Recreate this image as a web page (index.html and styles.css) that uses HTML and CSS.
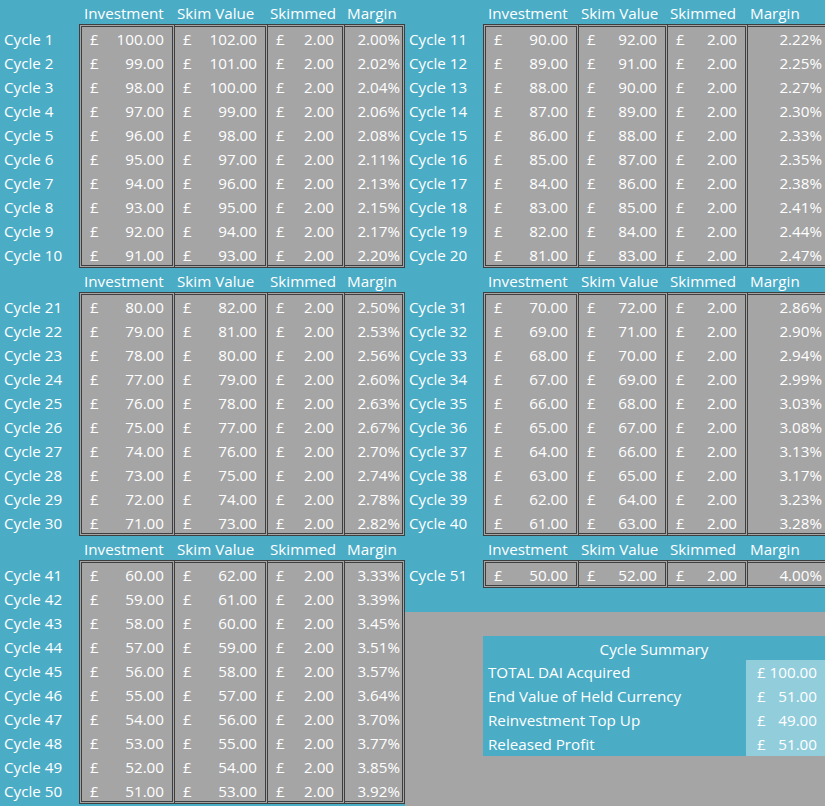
FILE: index.html
```html
<!DOCTYPE html>
<html>
<head>
<meta charset="utf-8">
<link rel="stylesheet" href="styles.css">
</head>
<body>
<div class="sheet">
  <div class="half left">
    <section class="block">
      <div class="col lab"><div>Cycle 1</div><div>Cycle 2</div><div>Cycle 3</div><div>Cycle 4</div><div>Cycle 5</div><div>Cycle 6</div><div>Cycle 7</div><div>Cycle 8</div><div>Cycle 9</div><div>Cycle 10</div></div>
      <div class="col c1"><div class="hd">Investment</div><div class="box"><div class="c"><b>£</b>100.00</div><div class="c"><b>£</b>99.00</div><div class="c"><b>£</b>98.00</div><div class="c"><b>£</b>97.00</div><div class="c"><b>£</b>96.00</div><div class="c"><b>£</b>95.00</div><div class="c"><b>£</b>94.00</div><div class="c"><b>£</b>93.00</div><div class="c"><b>£</b>92.00</div><div class="c"><b>£</b>91.00</div></div></div>
      <div class="col c2"><div class="hd">Skim Value</div><div class="box"><div class="c"><b>£</b>102.00</div><div class="c"><b>£</b>101.00</div><div class="c"><b>£</b>100.00</div><div class="c"><b>£</b>99.00</div><div class="c"><b>£</b>98.00</div><div class="c"><b>£</b>97.00</div><div class="c"><b>£</b>96.00</div><div class="c"><b>£</b>95.00</div><div class="c"><b>£</b>94.00</div><div class="c"><b>£</b>93.00</div></div></div>
      <div class="col c3"><div class="hd">Skimmed</div><div class="box"><div class="c"><b>£</b>2.00</div><div class="c"><b>£</b>2.00</div><div class="c"><b>£</b>2.00</div><div class="c"><b>£</b>2.00</div><div class="c"><b>£</b>2.00</div><div class="c"><b>£</b>2.00</div><div class="c"><b>£</b>2.00</div><div class="c"><b>£</b>2.00</div><div class="c"><b>£</b>2.00</div><div class="c"><b>£</b>2.00</div></div></div>
      <div class="col c4"><div class="hd">Margin</div><div class="box"><div class="c">2.00%</div><div class="c">2.02%</div><div class="c">2.04%</div><div class="c">2.06%</div><div class="c">2.08%</div><div class="c">2.11%</div><div class="c">2.13%</div><div class="c">2.15%</div><div class="c">2.17%</div><div class="c">2.20%</div></div></div>
    </section>
    <section class="block">
      <div class="col lab"><div>Cycle 21</div><div>Cycle 22</div><div>Cycle 23</div><div>Cycle 24</div><div>Cycle 25</div><div>Cycle 26</div><div>Cycle 27</div><div>Cycle 28</div><div>Cycle 29</div><div>Cycle 30</div></div>
      <div class="col c1"><div class="hd">Investment</div><div class="box"><div class="c"><b>£</b>80.00</div><div class="c"><b>£</b>79.00</div><div class="c"><b>£</b>78.00</div><div class="c"><b>£</b>77.00</div><div class="c"><b>£</b>76.00</div><div class="c"><b>£</b>75.00</div><div class="c"><b>£</b>74.00</div><div class="c"><b>£</b>73.00</div><div class="c"><b>£</b>72.00</div><div class="c"><b>£</b>71.00</div></div></div>
      <div class="col c2"><div class="hd">Skim Value</div><div class="box"><div class="c"><b>£</b>82.00</div><div class="c"><b>£</b>81.00</div><div class="c"><b>£</b>80.00</div><div class="c"><b>£</b>79.00</div><div class="c"><b>£</b>78.00</div><div class="c"><b>£</b>77.00</div><div class="c"><b>£</b>76.00</div><div class="c"><b>£</b>75.00</div><div class="c"><b>£</b>74.00</div><div class="c"><b>£</b>73.00</div></div></div>
      <div class="col c3"><div class="hd">Skimmed</div><div class="box"><div class="c"><b>£</b>2.00</div><div class="c"><b>£</b>2.00</div><div class="c"><b>£</b>2.00</div><div class="c"><b>£</b>2.00</div><div class="c"><b>£</b>2.00</div><div class="c"><b>£</b>2.00</div><div class="c"><b>£</b>2.00</div><div class="c"><b>£</b>2.00</div><div class="c"><b>£</b>2.00</div><div class="c"><b>£</b>2.00</div></div></div>
      <div class="col c4"><div class="hd">Margin</div><div class="box"><div class="c">2.50%</div><div class="c">2.53%</div><div class="c">2.56%</div><div class="c">2.60%</div><div class="c">2.63%</div><div class="c">2.67%</div><div class="c">2.70%</div><div class="c">2.74%</div><div class="c">2.78%</div><div class="c">2.82%</div></div></div>
    </section>
    <section class="block">
      <div class="col lab"><div>Cycle 41</div><div>Cycle 42</div><div>Cycle 43</div><div>Cycle 44</div><div>Cycle 45</div><div>Cycle 46</div><div>Cycle 47</div><div>Cycle 48</div><div>Cycle 49</div><div>Cycle 50</div></div>
      <div class="col c1"><div class="hd">Investment</div><div class="box"><div class="c"><b>£</b>60.00</div><div class="c"><b>£</b>59.00</div><div class="c"><b>£</b>58.00</div><div class="c"><b>£</b>57.00</div><div class="c"><b>£</b>56.00</div><div class="c"><b>£</b>55.00</div><div class="c"><b>£</b>54.00</div><div class="c"><b>£</b>53.00</div><div class="c"><b>£</b>52.00</div><div class="c"><b>£</b>51.00</div></div></div>
      <div class="col c2"><div class="hd">Skim Value</div><div class="box"><div class="c"><b>£</b>62.00</div><div class="c"><b>£</b>61.00</div><div class="c"><b>£</b>60.00</div><div class="c"><b>£</b>59.00</div><div class="c"><b>£</b>58.00</div><div class="c"><b>£</b>57.00</div><div class="c"><b>£</b>56.00</div><div class="c"><b>£</b>55.00</div><div class="c"><b>£</b>54.00</div><div class="c"><b>£</b>53.00</div></div></div>
      <div class="col c3"><div class="hd">Skimmed</div><div class="box"><div class="c"><b>£</b>2.00</div><div class="c"><b>£</b>2.00</div><div class="c"><b>£</b>2.00</div><div class="c"><b>£</b>2.00</div><div class="c"><b>£</b>2.00</div><div class="c"><b>£</b>2.00</div><div class="c"><b>£</b>2.00</div><div class="c"><b>£</b>2.00</div><div class="c"><b>£</b>2.00</div><div class="c"><b>£</b>2.00</div></div></div>
      <div class="col c4"><div class="hd">Margin</div><div class="box"><div class="c">3.33%</div><div class="c">3.39%</div><div class="c">3.45%</div><div class="c">3.51%</div><div class="c">3.57%</div><div class="c">3.64%</div><div class="c">3.70%</div><div class="c">3.77%</div><div class="c">3.85%</div><div class="c">3.92%</div></div></div>
    </section>
  </div>
  <div class="half right">
    <div class="top">
      <section class="block">
        <div class="col lab"><div>Cycle 11</div><div>Cycle 12</div><div>Cycle 13</div><div>Cycle 14</div><div>Cycle 15</div><div>Cycle 16</div><div>Cycle 17</div><div>Cycle 18</div><div>Cycle 19</div><div>Cycle 20</div></div>
        <div class="col c1"><div class="hd">Investment</div><div class="box"><div class="c"><b>£</b>90.00</div><div class="c"><b>£</b>89.00</div><div class="c"><b>£</b>88.00</div><div class="c"><b>£</b>87.00</div><div class="c"><b>£</b>86.00</div><div class="c"><b>£</b>85.00</div><div class="c"><b>£</b>84.00</div><div class="c"><b>£</b>83.00</div><div class="c"><b>£</b>82.00</div><div class="c"><b>£</b>81.00</div></div></div>
        <div class="col c2"><div class="hd">Skim Value</div><div class="box"><div class="c"><b>£</b>92.00</div><div class="c"><b>£</b>91.00</div><div class="c"><b>£</b>90.00</div><div class="c"><b>£</b>89.00</div><div class="c"><b>£</b>88.00</div><div class="c"><b>£</b>87.00</div><div class="c"><b>£</b>86.00</div><div class="c"><b>£</b>85.00</div><div class="c"><b>£</b>84.00</div><div class="c"><b>£</b>83.00</div></div></div>
        <div class="col c3"><div class="hd">Skimmed</div><div class="box"><div class="c"><b>£</b>2.00</div><div class="c"><b>£</b>2.00</div><div class="c"><b>£</b>2.00</div><div class="c"><b>£</b>2.00</div><div class="c"><b>£</b>2.00</div><div class="c"><b>£</b>2.00</div><div class="c"><b>£</b>2.00</div><div class="c"><b>£</b>2.00</div><div class="c"><b>£</b>2.00</div><div class="c"><b>£</b>2.00</div></div></div>
        <div class="col c4"><div class="hd">Margin</div><div class="box"><div class="c">2.22%</div><div class="c">2.25%</div><div class="c">2.27%</div><div class="c">2.30%</div><div class="c">2.33%</div><div class="c">2.35%</div><div class="c">2.38%</div><div class="c">2.41%</div><div class="c">2.44%</div><div class="c">2.47%</div></div></div>
      </section>
      <section class="block">
        <div class="col lab"><div>Cycle 31</div><div>Cycle 32</div><div>Cycle 33</div><div>Cycle 34</div><div>Cycle 35</div><div>Cycle 36</div><div>Cycle 37</div><div>Cycle 38</div><div>Cycle 39</div><div>Cycle 40</div></div>
        <div class="col c1"><div class="hd">Investment</div><div class="box"><div class="c"><b>£</b>70.00</div><div class="c"><b>£</b>69.00</div><div class="c"><b>£</b>68.00</div><div class="c"><b>£</b>67.00</div><div class="c"><b>£</b>66.00</div><div class="c"><b>£</b>65.00</div><div class="c"><b>£</b>64.00</div><div class="c"><b>£</b>63.00</div><div class="c"><b>£</b>62.00</div><div class="c"><b>£</b>61.00</div></div></div>
        <div class="col c2"><div class="hd">Skim Value</div><div class="box"><div class="c"><b>£</b>72.00</div><div class="c"><b>£</b>71.00</div><div class="c"><b>£</b>70.00</div><div class="c"><b>£</b>69.00</div><div class="c"><b>£</b>68.00</div><div class="c"><b>£</b>67.00</div><div class="c"><b>£</b>66.00</div><div class="c"><b>£</b>65.00</div><div class="c"><b>£</b>64.00</div><div class="c"><b>£</b>63.00</div></div></div>
        <div class="col c3"><div class="hd">Skimmed</div><div class="box"><div class="c"><b>£</b>2.00</div><div class="c"><b>£</b>2.00</div><div class="c"><b>£</b>2.00</div><div class="c"><b>£</b>2.00</div><div class="c"><b>£</b>2.00</div><div class="c"><b>£</b>2.00</div><div class="c"><b>£</b>2.00</div><div class="c"><b>£</b>2.00</div><div class="c"><b>£</b>2.00</div><div class="c"><b>£</b>2.00</div></div></div>
        <div class="col c4"><div class="hd">Margin</div><div class="box"><div class="c">2.86%</div><div class="c">2.90%</div><div class="c">2.94%</div><div class="c">2.99%</div><div class="c">3.03%</div><div class="c">3.08%</div><div class="c">3.13%</div><div class="c">3.17%</div><div class="c">3.23%</div><div class="c">3.28%</div></div></div>
      </section>
      <section class="block">
        <div class="col lab"><div>Cycle 51</div></div>
        <div class="col c1"><div class="hd">Investment</div><div class="box"><div class="c"><b>£</b>50.00</div></div></div>
        <div class="col c2"><div class="hd">Skim Value</div><div class="box"><div class="c"><b>£</b>52.00</div></div></div>
        <div class="col c3"><div class="hd">Skimmed</div><div class="box"><div class="c"><b>£</b>2.00</div></div></div>
        <div class="col c4"><div class="hd">Margin</div><div class="box"><div class="c">4.00%</div></div></div>
      </section>
    </div>
    <div class="bottom">
      <div class="summary">
        <div class="stitle">Cycle Summary</div>
        <div class="srow"><div class="sl">TOTAL DAI Acquired</div><div class="sv"><b>£</b>100.00</div></div>
        <div class="srow"><div class="sl">End Value of Held Currency</div><div class="sv"><b>£</b>51.00</div></div>
        <div class="srow"><div class="sl">Reinvestment Top Up</div><div class="sv"><b>£</b>49.00</div></div>
        <div class="srow"><div class="sl">Released Profit</div><div class="sv"><b>£</b>51.00</div></div>
      </div>
    </div>
  </div>
</div>
</body>
</html>
```
FILE: styles.css
```css
* { box-sizing: border-box; margin: 0; padding: 0; }
html, body { width: 825px; height: 806px; overflow: hidden; }
body {
  background: #a5a5a5;
  font-family: "Open Sans", "Noto Sans", sans-serif;
  font-size: 15.2px;
  color: #ffffff;
}
b { font-weight: normal; }
.sheet { display: flex; width: 825px; height: 806px; }
.half { display: flex; flex-direction: column; flex: none; }
.left { width: 405px; background: #4bacc6; }
.right { width: 420px; overflow: hidden; }
.top { background: #4bacc6; padding-bottom: 24px; }
.block { display: flex; align-items: flex-start; }
.col { flex: none; }

.lab { padding-top: 27px; }
.lab div { height: 24px; padding: 1px 0 0 4px; line-height: 23px; white-space: nowrap; }

.left .lab { width: 79px; }
.left .c1 { width: 96px; }
.left .c2 { width: 93px; }
.left .c3 { width: 77px; }
.left .c4 { width: 60px; }
.right .lab { width: 78px; }
.right .c1 { width: 96px; }
.right .c2 { width: 89px; }
.right .c3 { width: 80px; }
.right .c4 { width: 80px; }

.hd {
  height: 24px;
  padding: 2px 0 0 5px;
  line-height: 22px;
  white-space: nowrap;
  margin-right: 3px;
}
.c2 .hd, .c3 .hd, .c4 .hd { margin-left: -3px; }

.box {
  background: #a5a5a5;
  border: 3px double #3f3f3f;
  border-left: 0;
}
.c1 .box { border-left: 3px double #3f3f3f; }

.c {
  height: 24px;
  padding: 1px 8px 0 8px;
  line-height: 23px;
  display: flex;
  justify-content: space-between;
  white-space: nowrap;
}
.c:last-child { height: 22px; }
.c4 .c { justify-content: flex-end; padding-right: 2px; padding-left: 0; }
.right .c4 .c { padding-right: 3px; }

.bottom { flex: 1; background: #a5a5a5; padding: 24px 0 0 78px; }
.summary { background: #4bacc6; }
.stitle { height: 24px; padding-top: 2px; line-height: 22px; text-align: center; }
.srow { display: flex; height: 24px; line-height: 23px; }
.sl { flex: 1; padding: 1px 0 0 5px; white-space: nowrap; }
.sv {
  width: 79px;
  flex: none;
  background: #92cddc;
  display: flex;
  justify-content: space-between;
  padding: 1px 8px 0 11px;
}
```
